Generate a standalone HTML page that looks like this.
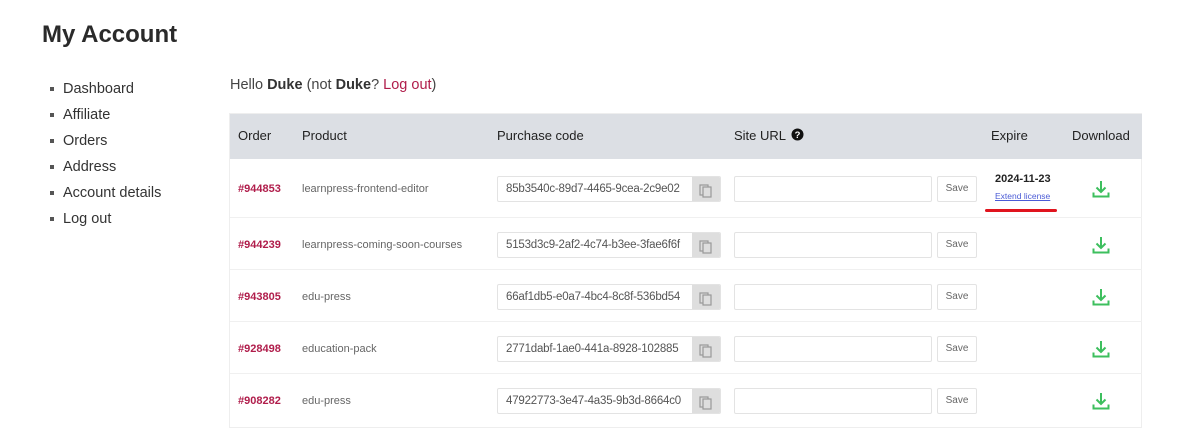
<!DOCTYPE html>
<html><head><meta charset="utf-8"><style>
*{margin:0;padding:0;box-sizing:border-box}
body{width:1200px;height:429px;background:#fff;font-family:"Liberation Sans",sans-serif;position:relative;overflow:hidden;color:#333}
.a{position:absolute;white-space:nowrap}
h1{position:absolute;left:42px;top:21px;font-size:24px;font-weight:bold;color:#2a2a2a}
.nav{position:absolute;left:50px;top:79px;font-size:14.5px;color:#333}
.nav div{height:26px;line-height:20px;position:relative;padding-left:13px}
.nav div:before{content:"";position:absolute;left:0;top:8px;width:4px;height:4px;background:#555}
.hello{left:230px;top:77px;font-size:14.5px;color:#444}
.hello b{color:#333}
.red{color:#b01d4b}
.tbl{position:absolute;left:229px;top:113px;width:913px;height:315px;border:1px solid #eee}
.hd{position:absolute;left:0;top:0;width:912px;height:45px;background:#dcdfe4}
.hd span{position:absolute;top:14px;font-size:13px;color:#222}
.sep{position:absolute;left:0;width:912px;height:1px;background:#f0f0f0}
.ord{position:absolute;left:8px;font-size:11px;color:#b01d4b;font-weight:bold;white-space:nowrap}
.prod{position:absolute;left:72px;font-size:11px;color:#666;white-space:nowrap}
.code{position:absolute;left:267px;width:224px;height:26px;border:1px solid #e3e3e3;border-radius:2px;overflow:hidden}
.code span{position:absolute;left:8px;top:6px;font-size:11.5px;color:#555;width:178px;overflow:hidden;white-space:nowrap;letter-spacing:-0.2px}
.code i{position:absolute;right:0;top:0;width:28px;height:26px;background:#dedede}
.url{position:absolute;left:504px;width:198px;height:26px;border:1px solid #e3e3e3;border-radius:2px}
.save{position:absolute;left:707px;width:40px;height:26px;border:1px solid #e3e3e3;border-radius:2px;font-size:10px;color:#666;text-align:center;line-height:24px}
.dl{position:absolute;left:862px}
</style></head><body>
<h1>My Account</h1>
<div class="nav"><div>Dashboard</div><div>Affiliate</div><div>Orders</div><div>Address</div><div>Account details</div><div>Log out</div></div>
<div class="a hello">Hello <b>Duke</b> (not <b>Duke</b>? <span class="red">Log out</span>)</div>
<div class="tbl">
<div class="hd">
<span style="left:8px">Order</span><span style="left:72px">Product</span><span style="left:267px">Purchase code</span>
<span style="left:504px">Site URL <svg width="13" height="13" viewBox="0 0 13 13" style="vertical-align:-1px;margin-left:2px"><circle cx="6.5" cy="6.5" r="6" fill="#111"/><text x="6.5" y="10" font-size="9.5" font-weight="bold" fill="#fff" text-anchor="middle" font-family="Liberation Sans">?</text></svg></span>
<span style="left:761px">Expire</span><span style="left:842px">Download</span>
</div>
<div class="sep" style="top:103px"></div>
<div class="sep" style="top:155px"></div>
<div class="sep" style="top:207px"></div>
<div class="sep" style="top:259px"></div>
<div class="ord" style="top:69px">#944853</div><div class="prod" style="top:69px">learnpress-frontend-editor</div>
<div class="code" style="top:62px"><span>85b3540c-89d7-4465-9cea-2c9e02</span><i><svg width="28" height="26"><rect x="8" y="8" width="8" height="10" fill="none" stroke="#999" stroke-width="1.2"/><rect x="11" y="10" width="8" height="10" fill="#dedede" stroke="#999" stroke-width="1.2"/></svg></i></div>
<div class="url" style="top:62px"></div><div class="save" style="top:62px">Save</div>
<div class="a" style="left:765px;top:59px;font-size:11px;font-weight:bold;color:#222">2024-11-23</div>
<div class="a" style="left:765px;top:77px;font-size:8.5px;color:#4b5bd6;text-decoration:underline">Extend license</div>
<div class="a" style="left:755px;top:95px;width:72px;height:3px;background:#e0141e;border-radius:2px"></div>

<div class="ord" style="top:125px">#944239</div><div class="prod" style="top:125px">learnpress-coming-soon-courses</div>
<div class="code" style="top:118px"><span>5153d3c9-2af2-4c74-b3ee-3fae6f6f</span><i><svg width="28" height="26"><rect x="8" y="8" width="8" height="10" fill="none" stroke="#999" stroke-width="1.2"/><rect x="11" y="10" width="8" height="10" fill="#dedede" stroke="#999" stroke-width="1.2"/></svg></i></div>
<div class="url" style="top:118px"></div><div class="save" style="top:118px">Save</div>

<div class="ord" style="top:177px">#943805</div><div class="prod" style="top:177px">edu-press</div>
<div class="code" style="top:170px"><span>66af1db5-e0a7-4bc4-8c8f-536bd54</span><i><svg width="28" height="26"><rect x="8" y="8" width="8" height="10" fill="none" stroke="#999" stroke-width="1.2"/><rect x="11" y="10" width="8" height="10" fill="#dedede" stroke="#999" stroke-width="1.2"/></svg></i></div>
<div class="url" style="top:170px"></div><div class="save" style="top:170px">Save</div>

<div class="ord" style="top:229px">#928498</div><div class="prod" style="top:229px">education-pack</div>
<div class="code" style="top:222px"><span>2771dabf-1ae0-441a-8928-102885</span><i><svg width="28" height="26"><rect x="8" y="8" width="8" height="10" fill="none" stroke="#999" stroke-width="1.2"/><rect x="11" y="10" width="8" height="10" fill="#dedede" stroke="#999" stroke-width="1.2"/></svg></i></div>
<div class="url" style="top:222px"></div><div class="save" style="top:222px">Save</div>

<div class="ord" style="top:281px">#908282</div><div class="prod" style="top:281px">edu-press</div>
<div class="code" style="top:274px"><span>47922773-3e47-4a35-9b3d-8664c0</span><i><svg width="28" height="26"><rect x="8" y="8" width="8" height="10" fill="none" stroke="#999" stroke-width="1.2"/><rect x="11" y="10" width="8" height="10" fill="#dedede" stroke="#999" stroke-width="1.2"/></svg></i></div>
<div class="url" style="top:274px"></div><div class="save" style="top:274px">Save</div>

<svg class="dl" style="top:66px" width="18" height="18" viewBox="0 0 18 18"><path d="M9 1v11M4.5 7.5L9 12l4.5-4.5M1.5 12.5v4h15v-4" fill="none" stroke="#3dbf5e" stroke-width="2"/></svg>
<svg class="dl" style="top:122px" width="18" height="18" viewBox="0 0 18 18"><path d="M9 1v11M4.5 7.5L9 12l4.5-4.5M1.5 12.5v4h15v-4" fill="none" stroke="#3dbf5e" stroke-width="2"/></svg>
<svg class="dl" style="top:174px" width="18" height="18" viewBox="0 0 18 18"><path d="M9 1v11M4.5 7.5L9 12l4.5-4.5M1.5 12.5v4h15v-4" fill="none" stroke="#3dbf5e" stroke-width="2"/></svg>
<svg class="dl" style="top:226px" width="18" height="18" viewBox="0 0 18 18"><path d="M9 1v11M4.5 7.5L9 12l4.5-4.5M1.5 12.5v4h15v-4" fill="none" stroke="#3dbf5e" stroke-width="2"/></svg>
<svg class="dl" style="top:278px" width="18" height="18" viewBox="0 0 18 18"><path d="M9 1v11M4.5 7.5L9 12l4.5-4.5M1.5 12.5v4h15v-4" fill="none" stroke="#3dbf5e" stroke-width="2"/></svg>
</div>
</body></html>
